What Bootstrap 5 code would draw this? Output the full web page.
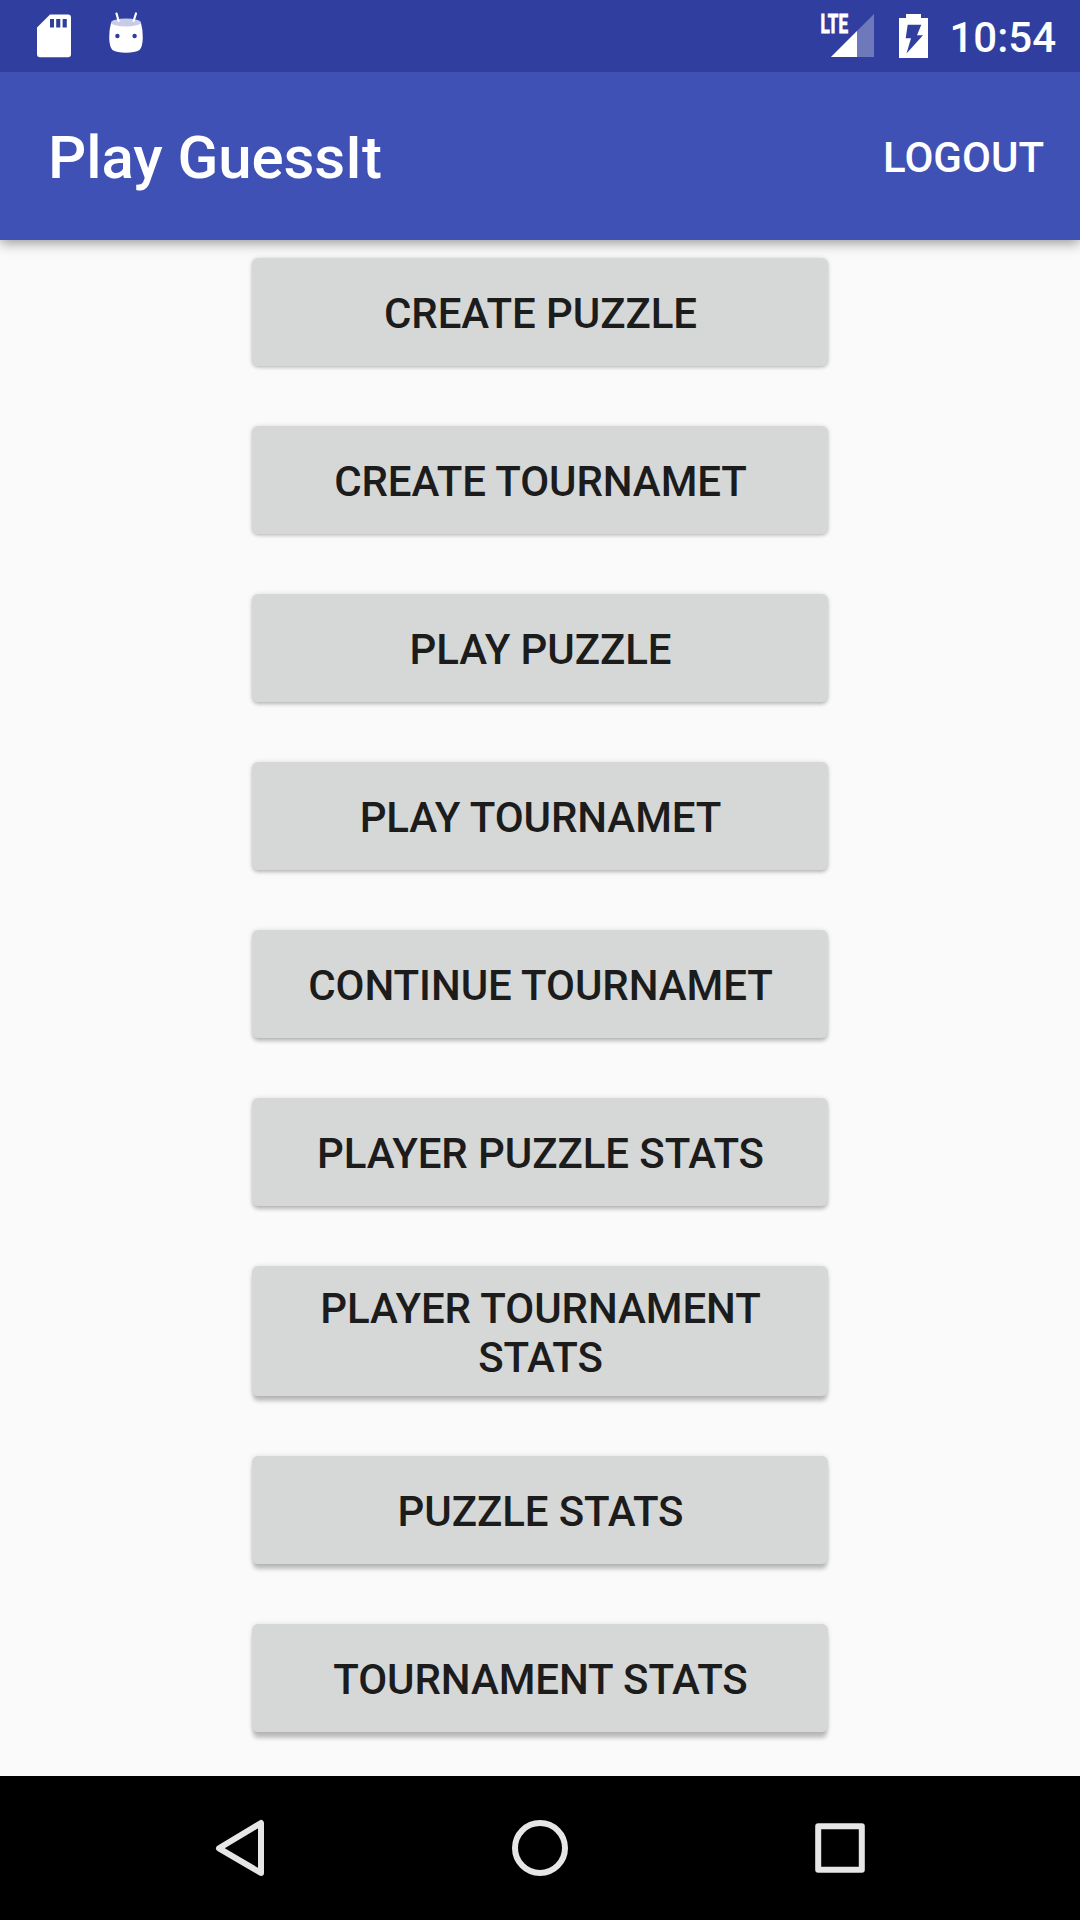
<!DOCTYPE html>
<html lang="en">
<head>
<meta charset="utf-8">
<meta name="viewport" content="width=device-width, initial-scale=1">
<title>Play GuessIt</title>
<link href="https://cdn.jsdelivr.net/npm/bootstrap@5.3.0/dist/css/bootstrap.min.css" rel="stylesheet">
<style>
  body { font-family: Roboto, "Noto Sans", sans-serif; background: #fafafa; height: 1920px; font-weight: 500; overflow: hidden; }
  svg { display: block; flex: none; }
  .status-bar { height: 72px; background: #303f9f; color: #fff; padding: 0 24px 0 36px; z-index: 2; }
  .robot { margin-left: 36px; }
  .battery { margin-left: 22px; }
  .clock { font-size: 42px; line-height: 49px; padding-top: 2px; margin-left: 19px; }
  .app-bar { height: 168px; background: #3f51b5; padding: 0 36px 0 48px; box-shadow: 0 3px 12px rgba(0,0,0,.4); z-index: 1; --bs-navbar-padding-y: 0; }
  .app-title { font-size: 60px; line-height: 70px; padding-top: 3px; letter-spacing: -.08px; }
  .app-action { font-size: 42px; line-height: 49px; padding-top: 2px; }
  .menu { padding-top: 18px; gap: 60px; }
  .menu .btn {
    --bs-btn-bg: #d6d8d7; --bs-btn-color: #1c1c1c; --bs-btn-hover-bg: #cbcdcc; --bs-btn-hover-color: #1c1c1c;
    --bs-btn-font-size: 42px; --bs-btn-line-height: 49px; --bs-btn-font-weight: 500;
    --bs-btn-border-width: 0; --bs-btn-border-radius: 6px;
    width: 576px; min-height: 108px; padding: 17px 23px 15px 24px; letter-spacing: -.08px;
    box-shadow: 0 var(--lift, 2px) 4px -1px rgba(0,0,0,.24), 0 0 5px rgba(0,0,0,.12);
  }
  .menu .btn:nth-child(n+3) { --lift: 3px; }
  .menu .btn:nth-child(n+5) { --lift: 4px; }
  .menu .btn:nth-child(n+7) { --lift: 6px; }
  .menu .btn:nth-child(n+9) { --lift: 7px; }
  .menu .two-line { padding-top: 18px; padding-bottom: 14px; }
  .nav-bar { height: 144px; background: #000; padding: 0 90px; }
  .nav-bar .btn { width: 300px; --bs-btn-padding-x: 0; --bs-btn-border-width: 0; }
</style>
</head>
<body class="d-flex flex-column">
  <div class="status-bar position-relative d-flex align-items-center flex-shrink-0">
    <svg width="36" height="72" viewBox="36 0 36 72" fill="#fff" aria-hidden="true">
      <path fill-rule="evenodd" d="M50 14.6H68Q71 14.6 71 17.6V54.2Q71 57.2 68 57.2H40Q37 57.2 37 54.2V27.6ZM50 19V27.4H54V19ZM56.2 19V27.4H60.3V19ZM62.6 19V27.4H66.8V19Z"/>
    </svg>
    <svg class="robot me-auto" width="36" height="72" viewBox="108 0 36 72" aria-hidden="true">
      <path d="M111 23Q126 29 141 23Q143 30 142.8 38Q142.5 47 139.5 50Q135 52.8 126 52.8Q117 52.8 112.5 50Q109.5 47 109.2 38Q109 30 111 23Z" fill="#fff"/>
      <ellipse cx="126" cy="22.5" rx="15" ry="4" fill="#c9cce6"/>
      <path d="M116.5 13.5L118.6 21M136 13.5L133.6 21" stroke="#fff" stroke-width="2.2" stroke-linecap="round"/>
      <circle cx="117.4" cy="36" r="2.2" fill="#303f9f"/><circle cx="134.6" cy="36" r="2.2" fill="#303f9f"/>
    </svg>
    <svg width="56" height="72" viewBox="820 0 56 72" fill="#fff" aria-label="LTE signal">
      <path d="M831 57L874 14V57Z" opacity=".3"/>
      <path d="M831 57L857 31V57Z"/>
      <text x="820.5" y="33.3" font-size="25.5" font-weight="700" textLength="27.5" lengthAdjust="spacingAndGlyphs" stroke="#fff" stroke-width=".9">LTE</text>
    </svg>
    <svg class="battery" width="32" height="72" viewBox="898 0 32 72" fill="#fff" aria-label="Charging">
      <path fill-rule="evenodd" d="M906 14H921V18H928V58H899V18H906ZM907.7 24.7H921.3L917 35.3H923L906.5 53.5L911 38.3H905.7Z"/>
    </svg>
    <span class="clock">10:54</span>
  </div>
  <nav class="app-bar navbar d-flex align-items-center justify-content-between flex-shrink-0 text-white">
    <span class="app-title">Play GuessIt</span>
    <a class="app-action text-white text-decoration-none" href="#">LOGOUT</a>
  </nav>
  <main class="menu flex-grow-1 d-flex flex-column align-items-center">
    <button class="btn d-flex align-items-center justify-content-center">CREATE PUZZLE</button>
    <button class="btn d-flex align-items-center justify-content-center">CREATE TOURNAMET</button>
    <button class="btn d-flex align-items-center justify-content-center">PLAY PUZZLE</button>
    <button class="btn d-flex align-items-center justify-content-center">PLAY TOURNAMET</button>
    <button class="btn d-flex align-items-center justify-content-center">CONTINUE TOURNAMET</button>
    <button class="btn d-flex align-items-center justify-content-center">PLAYER PUZZLE STATS</button>
    <button class="btn two-line d-flex align-items-center justify-content-center">PLAYER TOURNAMENT STATS</button>
    <button class="btn d-flex align-items-center justify-content-center">PUZZLE STATS</button>
    <button class="btn d-flex align-items-center justify-content-center">TOURNAMENT STATS</button>
  </main>
  <footer class="nav-bar d-flex align-items-center justify-content-between flex-shrink-0">
    <button class="btn d-flex justify-content-center" aria-label="Back">
      <svg width="60" height="60" viewBox="0 0 60 60" fill="none" stroke="#e6e6e6" stroke-width="6" stroke-linejoin="round"><path d="M51 5V55L9 30.3Z"/></svg>
    </button>
    <button class="btn d-flex justify-content-center" aria-label="Home">
      <svg width="60" height="60" viewBox="0 0 60 60" fill="none" stroke="#e6e6e6" stroke-width="6"><circle cx="30" cy="30" r="25"/></svg>
    </button>
    <button class="btn d-flex justify-content-center" aria-label="Recent apps">
      <svg width="60" height="60" viewBox="0 0 60 60" fill="none" stroke="#e6e6e6" stroke-width="6" stroke-linejoin="round"><rect x="8.2" y="8.2" width="43.6" height="43.6"/></svg>
    </button>
  </footer>
<script src="https://cdn.jsdelivr.net/npm/bootstrap@5.3.0/dist/js/bootstrap.bundle.min.js"></script>
</body>
</html>
